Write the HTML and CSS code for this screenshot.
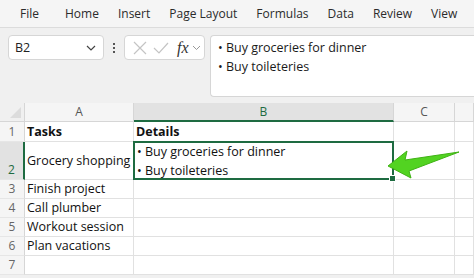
FILE: index.html
```html
<!DOCTYPE html>
<html lang="en">
<head>
    <meta charset="UTF-8">
    <title>Book1 - Excel</title>
    <link rel="stylesheet" href="styles.css">
</head>
<body>
    <div class="menubar">
        <span class="first">File</span>
        <span>Home</span>
        <span>Insert</span>
        <span>Page Layout</span>
        <span>Formulas</span>
        <span>Data</span>
        <span>Review</span>
        <span>View</span>
    </div>

    <div class="formulabar">
        <div class="namebox">
            <span>B2</span>
            <svg width="10" height="6" viewBox="0 0 10 6"><path d="M1 1l4 4 4-4" fill="none" stroke="#444" stroke-width="1.2"/></svg>
        </div>
        <div class="dots"><i></i><i></i><i></i></div>
        <div class="fxgroup">
            <svg width="14" height="14" viewBox="0 0 14 14"><path d="M1 1l12 12M13 1L1 13" stroke="#c4c4c4" stroke-width="1.2"/></svg>
            <svg width="16" height="14" viewBox="0 0 16 14"><path d="M1 7l5 5 9-10" fill="none" stroke="#c4c4c4" stroke-width="1.2"/></svg>
            <span class="fx">fx</span>
            <svg width="9" height="6" viewBox="0 0 9 6"><path d="M1 1l3.5 3.5L8 1" fill="none" stroke="#999" stroke-width="1"/></svg>
        </div>
        <div class="formula">
            <div>• Buy groceries for dinner</div>
            <div>• Buy toileteries</div>
        </div>
    </div>

    <div class="sheet">
        <div class="corner"><span></span></div>
        <div class="colhead">A</div>
        <div class="colhead active">B</div>
        <div class="colhead">C</div>
        <div class="colhead"></div>

        <div class="rowhead">1</div>
        <div class="cell bold">Tasks</div>
        <div class="cell bold">Details</div>
        <div class="cell"></div>
        <div class="cell"></div>

        <div class="rowhead active">2</div>
        <div class="cell middle">Grocery shopping</div>
        <div class="cell selected">
            <div>• Buy groceries for dinner</div>
            <div>• Buy toileteries</div>
            <span class="handle"></span>
        </div>
        <div class="cell"></div>
        <div class="cell"></div>

        <div class="rowhead">3</div>
        <div class="cell">Finish project</div>
        <div class="cell"></div>
        <div class="cell"></div>
        <div class="cell"></div>

        <div class="rowhead">4</div>
        <div class="cell">Call plumber</div>
        <div class="cell"></div>
        <div class="cell"></div>
        <div class="cell"></div>

        <div class="rowhead">5</div>
        <div class="cell">Workout session</div>
        <div class="cell"></div>
        <div class="cell"></div>
        <div class="cell"></div>

        <div class="rowhead">6</div>
        <div class="cell">Plan vacations</div>
        <div class="cell"></div>
        <div class="cell"></div>
        <div class="cell"></div>

        <div class="rowhead">7</div>
        <div class="cell"></div>
        <div class="cell"></div>
        <div class="cell"></div>
        <div class="cell"></div>

        <!-- callout arrow over the grid -->
        <svg class="arrow" width="80" height="36" viewBox="0 0 80 36">
            <path d="M4 19 L23 4 L21 13 L75 5 L25 24 L27 31 Z" fill="#52d321" stroke="#3fb214" stroke-width="1" stroke-linejoin="round"/>
        </svg>
    </div>
</body>
</html>
```

FILE: styles.css
```css
body{
    margin: 0;
    background-color: #f0f0f0;
    font-family: "Open Sans", "Noto Sans", sans-serif;
    overflow: hidden;
}
.menubar{
    height: 28px;
    display: flex;
    align-items: center;
    padding-left: 20px;
    background-color: #f5f5f5;
    border-bottom: 1px solid #dcdcdc;
    box-sizing: border-box;
    font-size: 12px;
    color: #2b2b2b;
    white-space: nowrap;
}
.menubar span{
    margin-right: 19px;
}
.menubar .first{
    margin-right: 26px;
}
.formulabar{
    height: 75px;
    display: flex;
    align-items: flex-start;
    padding: 7px 0 0 8px;
    box-sizing: border-box;
}
.namebox{
    width: 96px;
    height: 25px;
    background-color: white;
    border: 1px solid #d6d6d6;
    border-radius: 4px;
    box-sizing: border-box;
    display: flex;
    align-items: center;
    justify-content: space-between;
    padding: 0 7px 0 6px;
    font-size: 12.5px;
    color: #222;
}
.dots{
    width: 20px;
    height: 25px;
    display: flex;
    flex-direction: column;
    align-items: center;
    justify-content: center;
    gap: 2px;
}
.dots i{
    width: 2px;
    height: 2px;
    background-color: #555;
}
.fxgroup{
    width: 81px;
    height: 25px;
    background-color: white;
    border: 1px solid #d6d6d6;
    border-radius: 4px;
    box-sizing: border-box;
    display: flex;
    align-items: center;
    padding-left: 8px;
    gap: 6px;
}
.fxgroup .fx{
    font-family: "Liberation Serif", serif;
    font-style: italic;
    font-size: 16px;
    color: #333;
    margin-left: 2px;
    margin-right: -3px;
}
.formula{
    flex: 1;
    height: 62px;
    margin-left: 5px;
    background-color: white;
    border: 1px solid #d6d6d6;
    border-right: none;
    border-radius: 4px 0 0 4px;
    box-sizing: border-box;
    padding: 2px 0 0 7px;
    font-size: 12.5px;
    line-height: 19px;
    color: #1a1a1a;
}
.sheet{
    position: relative;
    display: grid;
    grid-template-columns: 25px 109px 260px 61px 1fr;
    grid-template-rows: 19px 20px 38px 19px 19px 19px 19px 19px;
    background-color: white;
    font-size: 12.5px;
    color: #111;
}
.corner{
    background-color: #f0f0f0;
    border-right: 1px solid #d6d6d6;
    border-bottom: 1px solid #d6d6d6;
    position: relative;
}
.corner span{
    position: absolute;
    right: 3px;
    bottom: 3px;
    width: 0;
    height: 0;
    border-left: 11px solid transparent;
    border-bottom: 11px solid #dcdcdc;
}
.colhead{
    background-color: #f5f5f5;
    border-right: 1px solid #d6d6d6;
    border-bottom: 1px solid #d6d6d6;
    text-align: center;
    line-height: 18px;
    color: #555;
    font-size: 12px;
}
.colhead.active{
    background-color: #e2e2e2;
    border-bottom: 2px solid #1e6b41;
    line-height: 17px;
    color: #1e6b41;
}
.rowhead{
    background-color: #f5f5f5;
    border-right: 1px solid #d6d6d6;
    border-bottom: 1px solid #e6e6e6;
    color: #666;
    font-size: 12px;
    display: flex;
    align-items: flex-end;
    justify-content: center;
    padding-bottom: 1px;
}
.rowhead.active{
    background-color: #e2e2e2;
    border-right: 2px solid #1e6b41;
    color: #1e6b41;
}
.cell{
    border-right: 1px solid #e1e1e1;
    border-bottom: 1px solid #e1e1e1;
    padding: 0 2px;
    line-height: 18px;
    white-space: nowrap;
    display: flex;
    align-items: flex-end;
}
.cell.bold{
    font-weight: bold;
}
.cell.middle{
    align-items: center;
}
.cell.selected{
    position: relative;
    flex-direction: column;
    align-items: flex-start;
    justify-content: center;
    border: 2px solid #1e6b41;
    margin: -1px 0 0 -1px;
    padding-left: 2px;
    line-height: 19px;
}
.handle{
    position: absolute;
    right: -4px;
    bottom: -4px;
    width: 5px;
    height: 5px;
    background-color: #1e6b41;
    border: 1px solid white;
}
.arrow{
    position: absolute;
    left: 384px;
    top: 44px;
}
```
